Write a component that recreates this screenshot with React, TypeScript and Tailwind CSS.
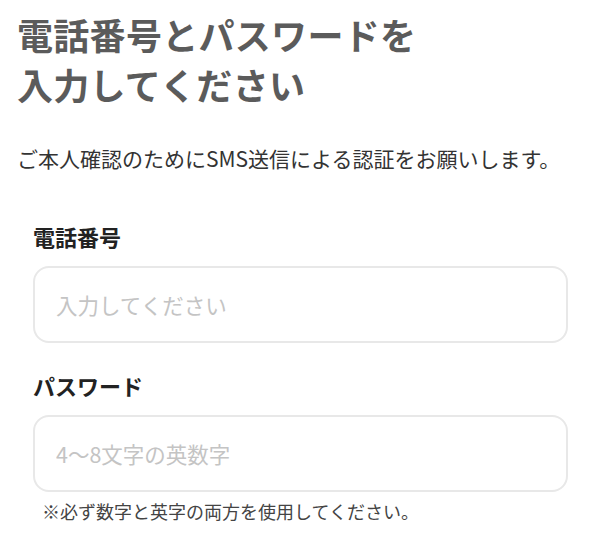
import React from 'react';

const font = { fontFamily: '"Noto Sans CJK JP", "Noto Sans", sans-serif' };

const Field: React.FC<{ label: string; placeholder: string; type?: string }> = ({ label, placeholder, type = 'text' }) => (
  <div>
    <label className="block text-[22px] leading-[30px] font-bold text-[#222]">{label}</label>
    <input
      type={type}
      placeholder={placeholder}
      className="mt-[15px] block w-full h-[77px] px-[21px] border-2 border-[#e8e8e8] rounded-[16px] bg-white text-[21.5px] text-[#333] placeholder:text-[#c4c4c4] outline-none"
      style={font}
    />
  </div>
);

export default function App() {
  return (
    <div className="w-[600px] h-[533px] overflow-hidden bg-white pt-[9px] pl-[17px] pr-[32px]" style={font}>
      <h1 className="text-[36px] leading-[50px] font-bold text-[#5b5b5b] tracking-[0.3px]">
        電話番号とパスワードを
        <br />
        入力してください
      </h1>
      <p className="mt-[34px] text-[21px] leading-[30px] text-[#333] whitespace-nowrap">
        ご本人確認のためにSMS送信による認証をお願いします。
      </p>
      <div className="mt-[48px] pl-[16px]">
        <Field label="電話番号" placeholder="入力してください" />
        <div className="mt-[27px]">
          <Field label="パスワード" placeholder="4〜8文字の英数字" type="text" />
        </div>
        <p className="mt-[7px] ml-[9px] text-[18px] leading-[24px] text-[#444]">
          ※必ず数字と英字の両方を使用してください。
        </p>
      </div>
    </div>
  );
}
